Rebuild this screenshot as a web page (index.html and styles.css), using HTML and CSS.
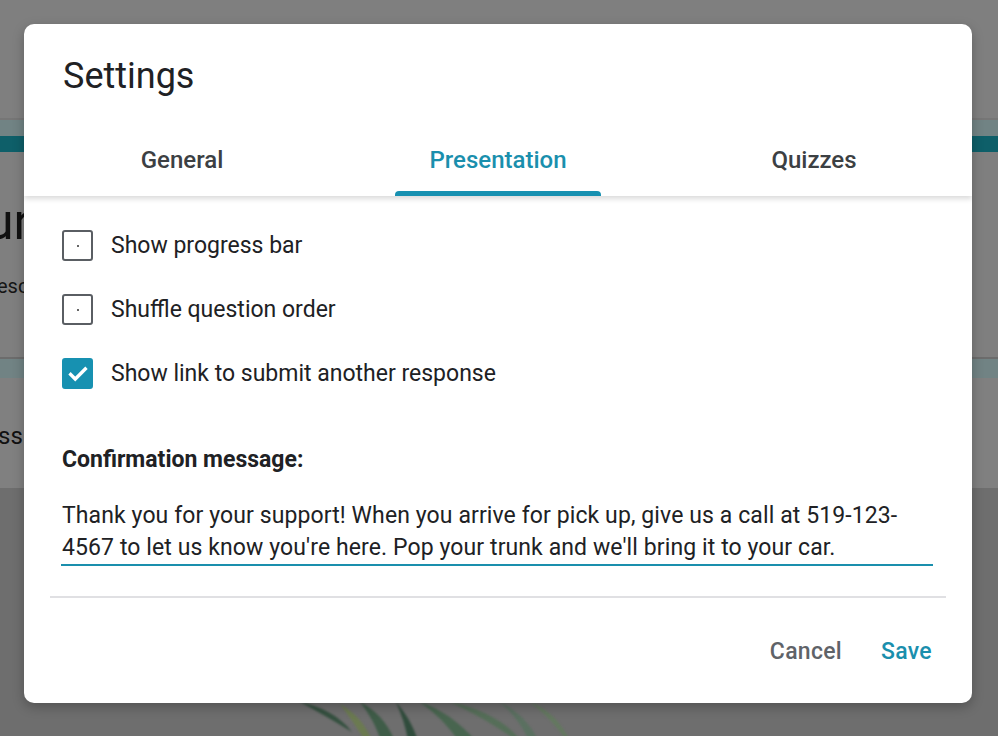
FILE: index.html
```html
<!DOCTYPE html>
<html lang="en">
<head>
<meta charset="utf-8">
<title>Settings</title>
<link rel="stylesheet" href="styles.css">
</head>
<body>
<div class="page">
  <div class="bg-header"></div>
  <div class="bg-line"></div>
  <div class="bg-band"></div>
  <div class="bg-teal"></div>
  <div class="bg-form">
    <div class="bg-title">ur</div>
    <div class="bg-desc">esc</div>
  </div>
  <div class="bg-band2"></div>
  <div class="bg-card"><div class="bg-ss">ss</div></div>
  <div class="bg-photo">
    <svg class="pineapple" width="280" height="60" viewBox="0 0 280 60">
      <path d="M0 0 C20 4 40 14 52 30 C42 24 26 14 0 0Z" fill="#34503f"/>
      <path d="M40 2 C60 14 72 30 76 54 C64 38 54 20 40 2Z" fill="#6b7a50"/>
      <path d="M60 0 C80 10 96 30 100 60 L86 60 C82 36 74 18 60 0Z" fill="#3f5c48"/>
      <path d="M96 0 C110 16 120 36 122 60 L110 60 C110 38 104 18 96 0Z" fill="#304c3c"/>
      <path d="M120 0 C150 10 176 34 190 60 L170 60 C160 36 142 16 120 0Z" fill="#48654f"/>
      <path d="M150 0 C180 6 210 20 226 46 C206 30 180 14 150 0Z" fill="#556e58"/>
      <path d="M200 0 C220 10 238 28 246 60 L236 60 C230 34 218 16 200 0Z" fill="#5a7060"/>
      <path d="M230 0 C250 8 266 24 274 50 C262 30 250 16 230 0Z" fill="#63785f"/>
    </svg>
  </div>
</div>

<div class="dialog">
  <div class="dialog-head">
    <h1 class="title">Settings</h1>
    <div class="tabs">
      <div class="tab">General</div>
      <div class="tab active">Presentation</div>
      <div class="tab">Quizzes</div>
    </div>
  </div>
  <div class="dialog-body">
    <div class="options">
      <div class="option">
        <span class="box"><span class="dot"></span></span>
        <span class="label">Show progress bar</span>
      </div>
      <div class="option">
        <span class="box"><span class="dot"></span></span>
        <span class="label">Shuffle question order</span>
      </div>
      <div class="option">
        <span class="box checked">
          <svg width="22" height="22" viewBox="0 0 24 24"><path d="M4 12.5l5 5L20 6.5" fill="none" stroke="#fff" stroke-width="3.6" stroke-linecap="square"/></svg>
        </span>
        <span class="label">Show link to submit another response</span>
      </div>
    </div>
    <div class="confirm-label">Confirmation message:</div>
    <div class="confirm-text">Thank you for your support! When you arrive for pick up, give us a call at 519-123-4567 to let us know you're here. Pop your trunk and we'll bring it to your car.</div>
  </div>
  <div class="divider"></div>
  <div class="actions">
    <span class="btn cancel">Cancel</span>
    <span class="btn save">Save</span>
  </div>
</div>
</body>
</html>
```

FILE: styles.css
```css
* { box-sizing: border-box; }
html, body { margin: 0; padding: 0; }
body {
  width: 998px;
  height: 736px;
  overflow: hidden;
  position: relative;
  font-family: Roboto, "Liberation Sans", sans-serif;
  background: #7f7f7f;
}
.page {
  display: flex;
  flex-direction: column;
  height: 736px;
}
.page > div { flex-shrink: 0; }
.bg-header { height: 118px; background: #7f7f7f; }
.bg-line { height: 2px; background: #767676; }
.bg-band { height: 16px; background: #718384; }
.bg-teal { height: 16px; background: #0e5f69; }
.bg-form {
  height: 205px;
  background: #7f7f7f;
  padding-top: 42px;
}
.bg-title {
  font-size: 50px;
  line-height: 56px;
  color: #111;
  margin-left: -14px;
}
.bg-desc {
  margin-top: 24px;
  font-size: 20px;
  line-height: 24px;
  color: #151515;
  margin-left: -3px;
}
.bg-band2 {
  height: 21px;
  background: #718384;
  border-top: 2px solid #6c6c6c;
}
.bg-card {
  height: 110px;
  background: #808080;
  padding-top: 44px;
}
.bg-ss {
  font-size: 24px;
  line-height: 28px;
  color: #111;
  margin-left: -2px;
}
.page > .bg-photo {
  flex: 1 1 auto;
  min-height: 0;
  overflow: hidden;
  background: #6e6e6e;
  padding-left: 300px;
  padding-top: 214px;
}
.pineapple { display: block; filter: blur(1.2px); }

.dialog {
  position: absolute;
  left: 24px;
  top: 24px;
  width: 948px;
  height: 679px;
  background: #fff;
  border-radius: 10px;
  box-shadow: 0 4px 12px rgba(0,0,0,0.25);
  display: flex;
  flex-direction: column;
  overflow: hidden;
}
.dialog-head {
  position: relative;
  z-index: 1;
  box-shadow: 0 3px 5px rgba(0,0,0,0.14);
}
.title {
  margin: 0;
  padding: 30px 0 0 39px;
  font-size: 36px;
  line-height: 44px;
  font-weight: 400;
  color: #202124;
}
.tabs {
  display: flex;
  margin-top: 48px;
  height: 50px;
}
.tab {
  flex: 1;
  text-align: center;
  font-size: 24px;
  line-height: 28px;
  font-weight: 500;
  color: #3c4043;
  position: relative;
}
.tab.active { color: #1a8fad; }
.tab.active::after {
  content: "";
  position: absolute;
  left: 50%;
  bottom: 0;
  width: 206px;
  margin-left: -103px;
  height: 5px;
  background: #1791b1;
  border-radius: 4px 4px 0 0;
}
.dialog-body {
  padding: 34px 38px 0 38px;
}
.options {
  display: flex;
  flex-direction: column;
  gap: 33px;
}
.option {
  display: flex;
  align-items: center;
  gap: 18px;
  height: 31px;
}
.box {
  width: 31px;
  height: 31px;
  border: 2.5px solid #5a5e63;
  border-radius: 3px;
  display: flex;
  align-items: center;
  justify-content: center;
  flex: none;
}
.dot { width: 2px; height: 2px; background: #333; border-radius: 1px; }
.box.checked {
  background: #1791b1;
  border-color: #1791b1;
}
.box.checked svg { display: block; }
.label {
  font-size: 23px;
  line-height: 28px;
  color: #202124;
}
.confirm-label {
  margin-top: 55px;
  font-size: 23px;
  line-height: 32px;
  font-weight: 700;
  color: #202124;
}
.confirm-text {
  margin-top: 24px;
  width: 872px;
  margin-left: -1px;
  padding-left: 1px;
  font-size: 23px;
  line-height: 32px;
  letter-spacing: 0.1px;
  color: #202124;
  border-bottom: 2px solid #1a8fad;
}
.divider {
  margin: 30px 26px 0 26px;
  height: 2px;
  background: #e0e0e3;
}
.actions {
  display: flex;
  justify-content: flex-end;
  gap: 39px;
  padding: 38px 40px 0 0;
}
.btn {
  font-size: 23px;
  line-height: 32px;
  font-weight: 500;
  letter-spacing: 0.3px;
}
.cancel { color: #5f6368; }
.save { color: #1a8fad; }
```
